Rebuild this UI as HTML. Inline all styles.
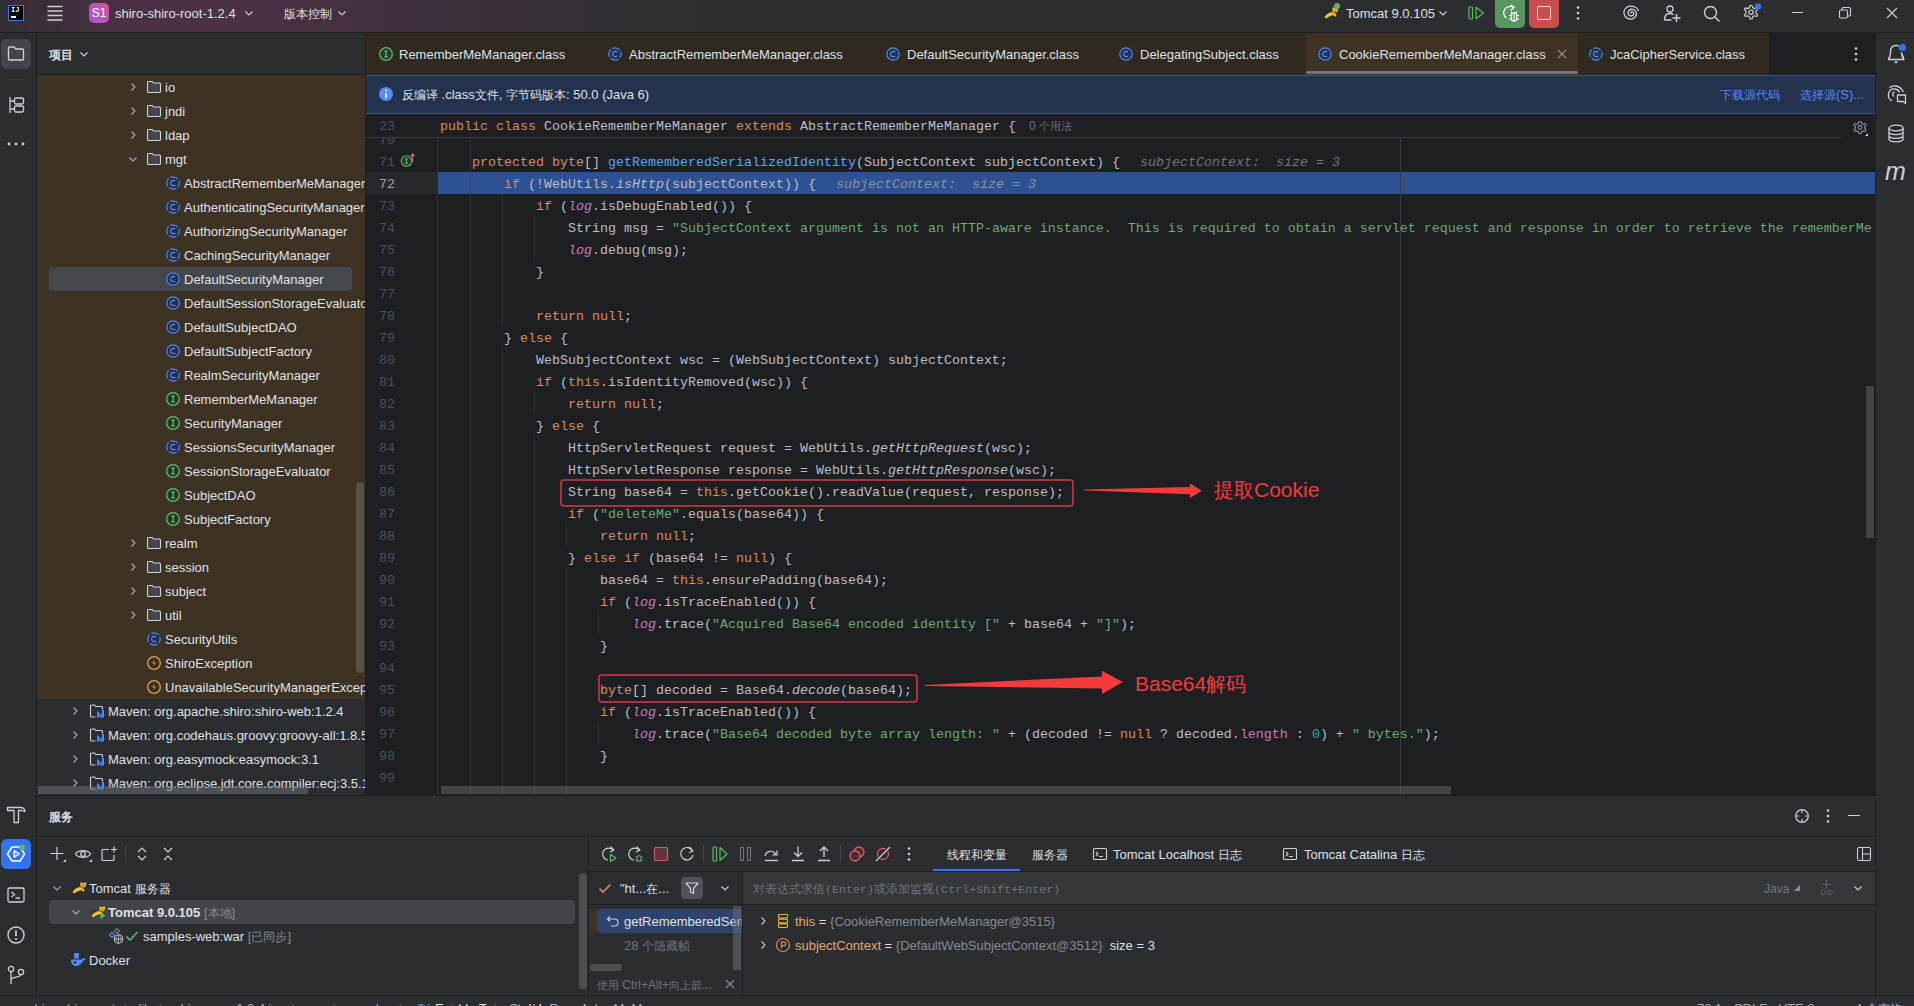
<!DOCTYPE html><html><head><meta charset="utf-8"><style>
*{margin:0;padding:0;box-sizing:border-box}
html,body{width:1914px;height:1006px;overflow:hidden;background:#2B2D30}
body{position:relative;font-family:"Liberation Sans",sans-serif;font-size:13px;color:#DFE1E5}
.a{position:absolute}
.mono{font-family:"Liberation Mono",monospace}
.ln{position:absolute;left:365px;width:30px;height:22px;line-height:22px;padding-top:2px;text-align:right;font-family:"Liberation Mono",monospace;font-size:13.333px;color:#4B5059}
.ln.cur{color:#A1A3AB}
.cl{position:absolute;left:440px;height:24px;line-height:22px;padding-top:2px;white-space:pre;font-family:"Liberation Mono",monospace;font-size:13.333px;color:#BCBEC4}
.k{color:#CF8E6D}.s{color:#6AAB73}.f{color:#56A8F5}.sf{color:#C77DBB;font-style:italic}.n{color:#2AACB8}.fld{color:#C77DBB}
.cl i{font-style:italic}
.hint{color:#6F737A;font-style:italic}
.ig{position:absolute;width:1px;background:#313338}
.t{position:absolute;white-space:pre;line-height:16px}
</style></head><body>
<div class="a" style="left:0;top:0;width:1914px;height:33px;background:#2B2D30"></div>
<div class="a" style="left:0;top:0;width:900px;height:33px;background:linear-gradient(90deg, rgba(120,55,95,0.08) 0, rgba(120,55,95,0.42) 130px, rgba(120,55,95,0.42) 230px, rgba(120,55,95,0.25) 420px, rgba(120,55,95,0.08) 620px, rgba(120,55,95,0) 800px)"></div>
<div class="a" style="left:365px;top:33px;width:1510px;height:763px;background:#1E1F22;overflow:hidden">
</div>
<div class="a" style="left:0;top:0;width:1875px;height:796px;overflow:hidden;clip-path:inset(137px 0 0 365px)">
<div class="ig" style="left:437px;top:128px;height:682px"></div><div class="ig" style="left:470px;top:128px;height:682px"></div><div class="ig" style="left:502px;top:194px;height:132px"></div><div class="ig" style="left:502px;top:348px;height:462px"></div><div class="ig" style="left:534px;top:216px;height:44px"></div><div class="ig" style="left:534px;top:392px;height:22px"></div><div class="ig" style="left:534px;top:436px;height:374px"></div><div class="ig" style="left:566px;top:524px;height:22px"></div><div class="ig" style="left:566px;top:568px;height:242px"></div><div class="ig" style="left:598px;top:612px;height:22px"></div><div class="ig" style="left:598px;top:722px;height:22px"></div>
<div class="a" style="left:438px;top:172px;width:1437px;height:22px;background:#2D5193"></div>
<div class="a" style="left:366px;top:172px;width:72px;height:22px;background:#26282C"></div>
<div class="a" style="left:470px;top:172px;width:1px;height:22px;background:#28467C"></div>
<div class="a" style="left:1400px;top:114px;width:1px;height:682px;background:#393B40"></div>
<div class="ln" style="top:128px">70</div><div class="ln" style="top:150px">71</div><div class="cl" style="top:150px">    <span class="k">protected</span> <span class="k">byte</span>[] <span class="f">getRememberedSerializedIdentity</span>(SubjectContext subjectContext) {</div><div class="ln cur" style="top:172px">72</div><div class="cl" style="top:172px">        <span class="k">if</span> (!WebUtils.<i>isHttp</i>(subjectContext)) {</div><div class="ln" style="top:194px">73</div><div class="cl" style="top:194px">            <span class="k">if</span> (<span class="sf">log</span>.isDebugEnabled()) {</div><div class="ln" style="top:216px">74</div><div class="cl" style="top:216px">                String msg = <span class="s">&quot;SubjectContext argument is not an HTTP-aware instance.  This is required to obtain a servlet request and response in order to retrieve the rememberMe cookie. Returning immediately and ignoring rememberMe operation.&quot;</span>;</div><div class="ln" style="top:238px">75</div><div class="cl" style="top:238px">                <span class="sf">log</span>.debug(msg);</div><div class="ln" style="top:260px">76</div><div class="cl" style="top:260px">            }</div><div class="ln" style="top:282px">77</div><div class="ln" style="top:304px">78</div><div class="cl" style="top:304px">            <span class="k">return</span> <span class="k">null</span>;</div><div class="ln" style="top:326px">79</div><div class="cl" style="top:326px">        } <span class="k">else</span> {</div><div class="ln" style="top:348px">80</div><div class="cl" style="top:348px">            WebSubjectContext wsc = (WebSubjectContext) subjectContext;</div><div class="ln" style="top:370px">81</div><div class="cl" style="top:370px">            <span class="k">if</span> (<span class="k">this</span>.isIdentityRemoved(wsc)) {</div><div class="ln" style="top:392px">82</div><div class="cl" style="top:392px">                <span class="k">return</span> <span class="k">null</span>;</div><div class="ln" style="top:414px">83</div><div class="cl" style="top:414px">            } <span class="k">else</span> {</div><div class="ln" style="top:436px">84</div><div class="cl" style="top:436px">                HttpServletRequest request = WebUtils.<i>getHttpRequest</i>(wsc);</div><div class="ln" style="top:458px">85</div><div class="cl" style="top:458px">                HttpServletResponse response = WebUtils.<i>getHttpResponse</i>(wsc);</div><div class="ln" style="top:480px">86</div><div class="cl" style="top:480px">                String base64 = <span class="k">this</span>.getCookie().readValue(request, response);</div><div class="ln" style="top:502px">87</div><div class="cl" style="top:502px">                <span class="k">if</span> (<span class="s">&quot;deleteMe&quot;</span>.equals(base64)) {</div><div class="ln" style="top:524px">88</div><div class="cl" style="top:524px">                    <span class="k">return</span> <span class="k">null</span>;</div><div class="ln" style="top:546px">89</div><div class="cl" style="top:546px">                } <span class="k">else if</span> (base64 != <span class="k">null</span>) {</div><div class="ln" style="top:568px">90</div><div class="cl" style="top:568px">                    base64 = <span class="k">this</span>.ensurePadding(base64);</div><div class="ln" style="top:590px">91</div><div class="cl" style="top:590px">                    <span class="k">if</span> (<span class="sf">log</span>.isTraceEnabled()) {</div><div class="ln" style="top:612px">92</div><div class="cl" style="top:612px">                        <span class="sf">log</span>.trace(<span class="s">&quot;Acquired Base64 encoded identity [&quot;</span> + base64 + <span class="s">&quot;]&quot;</span>);</div><div class="ln" style="top:634px">93</div><div class="cl" style="top:634px">                    }</div><div class="ln" style="top:656px">94</div><div class="ln" style="top:678px">95</div><div class="cl" style="top:678px">                    <span class="k">byte</span>[] decoded = Base64.<i>decode</i>(base64);</div><div class="ln" style="top:700px">96</div><div class="cl" style="top:700px">                    <span class="k">if</span> (<span class="sf">log</span>.isTraceEnabled()) {</div><div class="ln" style="top:722px">97</div><div class="cl" style="top:722px">                        <span class="sf">log</span>.trace(<span class="s">&quot;Base64 decoded byte array length: &quot;</span> + (decoded != <span class="k">null</span> ? decoded.<span class="fld">length</span> : <span class="n">0</span>) + <span class="s">&quot; bytes.&quot;</span>);</div><div class="ln" style="top:744px">98</div><div class="cl" style="top:744px">                    }</div><div class="ln" style="top:766px">99</div><div class="ln" style="top:788px">100</div><div class="cl" style="top:788px">                    <span class="k">return</span> decoded;</div>
<div class="cl hint" style="top:150px;left:1140px">subjectContext:  size = 3</div>
<div class="cl hint" style="top:172px;left:836px;color:#8C93A3">subjectContext:  size = 3</div>
</div>
<div class="a" style="left:36px;top:33px;width:1px;height:963px;background:#1E1F22"></div>
<div class="a" style="left:0;top:32px;width:1914px;height:1px;background:#1E1F22"></div>
<div class="a" style="left:1px;top:39px;width:30px;height:30px;border-radius:6px;background:#43454A"></div>
<svg class="a" style="left:6px;top:45px;" width="20" height="18" viewBox="0 0 20 18" fill="none"><path d="M2.5 3 a1 1 0 0 1 1-1 H8 L10 4 H16.5 a1 1 0 0 1 1 1 V14 a1 1 0 0 1 -1 1 H3.5 a1 1 0 0 1 -1-1 Z" stroke="#CED0D6" stroke-width="1.3"/></svg>
<div class="a" style="left:4px;top:79px;width:24px;height:1px;background:#393B40"></div>
<svg class="a" style="left:6px;top:95px;" width="20" height="20" viewBox="0 0 20 20" fill="none"><path d="M4 2 V18 M4 6 H8 M4 14 H8" stroke="#CED0D6" stroke-width="1.3"/><rect x="8.5" y="3" width="9" height="6" rx="1.5" stroke="#CED0D6" stroke-width="1.3"/><rect x="8.5" y="11" width="9" height="6" rx="1.5" stroke="#CED0D6" stroke-width="1.3"/></svg>
<svg class="a" style="left:6px;top:139px;" width="20" height="10" viewBox="0 0 20 10" fill="none"><circle cx="3" cy="5" r="1.4" fill="#CED0D6"/><circle cx="10" cy="5" r="1.4" fill="#CED0D6"/><circle cx="17" cy="5" r="1.4" fill="#CED0D6"/></svg>
<svg class="a" style="left:5px;top:805px;" width="22" height="20" viewBox="0 0 22 20" fill="none"><path d="M2.5 2.5 H16 C18 2.5 19.5 4 20 6.5 L16.5 5.5 H13.5 V17.5 H9 V5.5 H2.5 Z" stroke="#CED0D6" stroke-width="1.3" stroke-linejoin="round"/></svg>
<div class="a" style="left:1px;top:839px;width:30px;height:30px;border-radius:6px;background:#3574F0"></div>
<svg class="a" style="left:6px;top:844px;" width="20" height="20" viewBox="0 0 20 20" fill="none"><path d="M6 3 H14 L18.5 10 L14 17 H6 L1.5 10 Z" stroke="#FFFFFF" stroke-width="1.5" stroke-linejoin="round"/><path d="M8.2 6.8 V13.2 L13.2 10 Z" stroke="#FFFFFF" stroke-width="1.4" stroke-linejoin="round"/><circle cx="16" cy="3.5" r="3" fill="#5FB865"/></svg>
<svg class="a" style="left:6px;top:885px;" width="20" height="20" viewBox="0 0 20 20" fill="none"><rect x="2" y="3" width="16" height="14" rx="1.5" stroke="#CED0D6" stroke-width="1.3"/><path d="M5.5 7 L8.5 9.5 L5.5 12 M9.5 13 H14" stroke="#CED0D6" stroke-width="1.3"/></svg>
<svg class="a" style="left:6px;top:925px;" width="20" height="20" viewBox="0 0 20 20" fill="none"><circle cx="10" cy="10" r="8" stroke="#CED0D6" stroke-width="1.4"/><path d="M10 5.5 V11" stroke="#CED0D6" stroke-width="1.8"/><circle cx="10" cy="14" r="1.1" fill="#CED0D6"/></svg>
<svg class="a" style="left:6px;top:964px;" width="20" height="22" viewBox="0 0 20 22" fill="none"><circle cx="5" cy="5" r="2.6" stroke="#CED0D6" stroke-width="1.3"/><circle cx="15" cy="8" r="2.6" stroke="#CED0D6" stroke-width="1.3"/><path d="M5 7.6 V20 M5 16 C5 12 15 14 15 10.6" stroke="#CED0D6" stroke-width="1.3"/></svg>
<div class="a" style="left:1875px;top:33px;width:1px;height:963px;background:#1E1F22"></div>
<svg class="a" style="left:1880px;top:40px;" width="32" height="70" viewBox="0 0 32 70" fill="none"><g transform="translate(0,-40)"><path d="M8 59.5 C9.5 58 10.5 56 10.5 52 C10.5 47.5 12.5 45.5 16 45.5 C17 45.5 18 45.7 18.8 46.2 M21.5 52.5 C21.5 56 22.5 58 24 59.5 Z M8 59.5 H24" stroke="#CED0D6" stroke-width="1.3" stroke-linejoin="round"/><path d="M14.5 61.8 H17.5 L16 63.3 Z" fill="#CED0D6" stroke="#CED0D6" stroke-width="0.8"/><circle cx="22.4" cy="47.5" r="3.6" fill="#3574F0"/><path d="M9.5 87.5 C13 85 19.5 84.5 23.5 92 M12 101 C6 98 8 88 15 89 C17.5 89.3 19 91 19.6 92.5 M14 96.5 C12 95 12.5 92 14.8 92.2" stroke="#CED0D6" stroke-width="1.3"/><path d="M17.5 95 H25.5 V103.5 L23 101.5 H17.5 Z" stroke="#CED0D6" stroke-width="1.3" stroke-linejoin="round"/></g></svg>
<svg class="a" style="left:1886px;top:123px;" width="20" height="22" viewBox="0 0 20 22" fill="none"><ellipse cx="10" cy="5" rx="7" ry="2.8" stroke="#CED0D6" stroke-width="1.3"/><path d="M3 5 V16 A7 2.8 0 0 0 17 16 V5 M3 8.8 A7 2.8 0 0 0 17 8.8 M3 12.5 A7 2.8 0 0 0 17 12.5" stroke="#CED0D6" stroke-width="1.3"/></svg>
<div class="a" style="left:1885px;top:156px;width:24px;height:30px;font-family:'Liberation Sans',sans-serif;font-style:italic;font-size:25px;line-height:30px;color:#CED0D6">m</div>
<div class="a" style="left:8px;top:5px;width:16px;height:16px;background:#000;border:1.5px solid #2F7CF6"></div>
<div class="a mono" style="left:11px;top:6px;font-size:7px;line-height:8px;font-weight:bold;color:#fff">IJ</div>
<div class="a" style="left:11px;top:16px;width:5px;height:1.5px;background:#fff"></div>
<svg class="a" style="left:46px;top:4px;" width="18" height="18" viewBox="0 0 18 18" fill="none"><path d="M1.5 2.5 H16.5 M1.5 7 H16.5 M1.5 11.5 H16.5 M1.5 16 H16.5" stroke="#CED0D6" stroke-width="1.3"/></svg>
<div class="a" style="left:89px;top:3px;width:20px;height:20px;border-radius:5px;background:linear-gradient(45deg,#A457D6,#D4519A)"></div>
<div class="a" style="left:89px;top:3px;width:20px;height:20px;text-align:center;font-size:12px;line-height:20px;color:#fff">S1</div>
<div class="t" style="left:115px;top:6.0px;color:#DFE1E5;font-size:13px;line-height:16px;">shiro-shiro-root-1.2.4</div>
<svg class="a" style="left:244px;top:8px;" width="10" height="10" viewBox="0 0 10 10" fill="none"><path d="M1.5 3.5 L5 7 L8.5 3.5" stroke="#CED0D6" stroke-width="1.1"/></svg>
<div class="t" style="left:284px;top:6.0px;color:#DFE1E5;font-size:13px;line-height:16px;"><span style="font-size:12.0px">版本控制</span></div>
<svg class="a" style="left:337px;top:8px;" width="10" height="10" viewBox="0 0 10 10" fill="none"><path d="M1.5 3.5 L5 7 L8.5 3.5" stroke="#CED0D6" stroke-width="1.1"/></svg>
<svg class="a" style="left:1323px;top:4px;" width="17" height="17" viewBox="0 0 17 17" fill="none"><path d="M1 13.5 C2.5 10.5 5.5 8 9.5 7.5 L12.5 8.5 L14 12.5 L12 13 L10.5 11.5 C8 12 5.5 13 3.5 14.8 Z" fill="#F0C23B" stroke="#2A2410" stroke-width="0.7"/><path d="M9 5.5 L9.3 2 L11 3.6 H13.4 L15.2 2 L15.4 5.5 C15.4 7.8 14 9 12.2 9 C10.4 9 9 7.8 9 5.5 Z" fill="#F0C23B" stroke="#2A2410" stroke-width="0.7"/><path d="M11 5.8 H11.6 M12.9 5.8 H13.5 M11.6 7.3 H12.9" stroke="#2A2410" stroke-width="0.8"/><path d="M1 9.5 C2.5 8 4.5 7.6 6 8" stroke="#2A2410" stroke-width="0.9"/></svg>
<div class="a" style="left:1334px;top:3px;width:6px;height:6px;border-radius:3px;background:#5FB865"></div>
<div class="t" style="left:1346px;top:6.0px;color:#DFE1E5;font-size:13px;line-height:16px;">Tomcat 9.0.105</div>
<svg class="a" style="left:1438px;top:8px;" width="10" height="10" viewBox="0 0 10 10" fill="none"><path d="M1.5 3.5 L5 7 L8.5 3.5" stroke="#CED0D6" stroke-width="1.1"/></svg>
<svg class="a" style="left:1467px;top:5px;" width="18" height="16" viewBox="0 0 18 16" fill="none"><rect x="2" y="2" width="3.5" height="12" rx="0.8" stroke="#5FB865" stroke-width="1.2"/><path d="M9 2.2 L16.5 8 L9 13.8 Z" stroke="#5FB865" stroke-width="1.2" stroke-linejoin="round"/></svg>
<div class="a" style="left:1495px;top:-5px;width:30px;height:33px;border-radius:5px;background:#57965C"></div>
<svg class="a" style="left:1500px;top:3px;" width="22" height="22" viewBox="0 0 22 22" fill="none"><path d="M13.5 4.5 A6.3 6.3 0 1 0 6.5 15" stroke="#fff" stroke-width="1.3"/><path d="M10.8 1.8 L14 4.6 L10.8 7.2" stroke="#fff" stroke-width="1.3"/><path d="M11.3 12.5 a2.7 2.7 0 0 1 5.4 0 V15.5 a2.7 2.7 0 0 1 -5.4 0 Z" stroke="#fff" stroke-width="1.2"/><path d="M9 12.5 H11.3 M16.7 12.5 H19 M9 16 H11.3 M16.7 16 H19 M12 10 L11 8.5 M16 10 L17 8.5 M14 11 V18" stroke="#fff" stroke-width="1.1"/></svg>
<div class="a" style="left:1529px;top:-5px;width:30px;height:33px;border-radius:5px;background:#C94F4F"></div>
<div class="a" style="left:1537px;top:6px;width:14px;height:14px;border-radius:2px;border:1.6px solid #F5D9D9"></div>
<svg class="a" style="left:1575px;top:5px;" width="6" height="16" viewBox="0 0 6 16" fill="none"><circle cx="3" cy="2.5" r="1.3" fill="#CED0D6"/><circle cx="3" cy="8" r="1.3" fill="#CED0D6"/><circle cx="3" cy="13.5" r="1.3" fill="#CED0D6"/></svg>
<svg class="a" style="left:1621px;top:3px;" width="20" height="20" viewBox="0 0 20 20" fill="none"><path d="M10 10.5 C9 9.5 10.5 8 12 8.8 C14 10 12.5 13 10 13 C7 13 6 9.5 8 7.5 C10.5 5 15 6.5 15.5 10 C16 14 12 16.5 8.5 16 C4.5 15.5 2.5 12 3 8.5 C3.5 5 7 3 10.5 3.2 C14 3.4 17 5.5 17.5 8" stroke="#CED0D6" stroke-width="1.3"/></svg>
<svg class="a" style="left:1662px;top:3px;" width="20" height="20" viewBox="0 0 20 20" fill="none"><circle cx="8" cy="6" r="3" stroke="#CED0D6" stroke-width="1.3"/><path d="M2.5 17 C2.5 12.5 5 10.5 8 10.5 C9.5 10.5 10.5 11 11.5 11.8 M2.5 17 H9.5" stroke="#CED0D6" stroke-width="1.3"/><path d="M14.5 11 V19 M10.5 15 H18.5" stroke="#CED0D6" stroke-width="1.4"/></svg>
<svg class="a" style="left:1702px;top:4px;" width="20" height="20" viewBox="0 0 20 20" fill="none"><circle cx="8.5" cy="8.5" r="6" stroke="#CED0D6" stroke-width="1.4"/><path d="M13 13 L17.5 17.5" stroke="#CED0D6" stroke-width="1.5"/></svg>
<svg class="a" style="left:1741px;top:3px;" width="22" height="20" viewBox="0 0 22 20" fill="none"><path d="M9 2.5 H11 L11.6 4.6 L13.5 5.6 L15.6 4.9 L16.6 6.6 L15 8.2 V10.2 L16.6 11.8 L15.6 13.5 L13.5 12.8 L11.6 13.8 L11 16 H9 L8.4 13.8 L6.5 12.8 L4.4 13.5 L3.4 11.8 L5 10.2 V8.2 L3.4 6.6 L4.4 4.9 L6.5 5.6 L8.4 4.6 Z" stroke="#CED0D6" stroke-width="1.2" stroke-linejoin="round"/><circle cx="10" cy="9.2" r="2.2" stroke="#CED0D6" stroke-width="1.2"/><circle cx="17" cy="3.5" r="3.2" fill="#3574F0"/></svg>
<div class="a" style="left:1792px;top:12px;width:11px;height:1px;background:#CED0D6"></div>
<svg class="a" style="left:1838px;top:6px;" width="14" height="14" viewBox="0 0 14 14" fill="none"><rect x="1.5" y="4" width="8" height="8" rx="1.5" stroke="#CED0D6" stroke-width="1.1"/><path d="M4 4 V3 a1.5 1.5 0 0 1 1.5-1.5 H11 a1.5 1.5 0 0 1 1.5 1.5 V8.5 a1.5 1.5 0 0 1 -1.5 1.5 H9.5" stroke="#CED0D6" stroke-width="1.1"/></svg>
<svg class="a" style="left:1886px;top:7px;" width="12" height="12" viewBox="0 0 12 12" fill="none"><path d="M1 1 L11 11 M11 1 L1 11" stroke="#CED0D6" stroke-width="1.1"/></svg>
<div class="t" style="left:49px;top:47.0px;color:#DFE1E5;font-size:13px;line-height:16px;font-weight:bold"><span style="font-size:12.0px">项目</span></div>
<svg class="a" style="left:79px;top:49px;" width="10" height="10" viewBox="0 0 10 10" fill="none"><path d="M1.5 3.5 L5 7 L8.5 3.5" stroke="#CED0D6" stroke-width="1.1"/></svg>
<div class="a" style="left:37px;top:74px;width:328px;height:1px;background:#1E1F22"></div>
<div class="a" style="left:37px;top:75px;width:328px;height:624px;background:#3D3223"></div>
<div class="a" style="left:0;top:0;width:365px;height:795px;overflow:hidden">
<div class="a" style="left:49px;top:267px;width:303px;height:24px;border-radius:4px;background:#45474D"></div>
<svg class="a" style="left:128px;top:82px;" width="10" height="10" viewBox="0 0 10 10" fill="none"><path d="M3.5 1.5 L7 5 L3.5 8.5" stroke="#A8ADBD" stroke-width="1.1"/></svg>
<svg class="a" style="left:146px;top:80px;" width="16" height="14" viewBox="0 0 16 14" fill="none"><path d="M1.5 2.5 a1 1 0 0 1 1-1 H6 L7.6 3 H13.5 a1 1 0 0 1 1 1 V11.5 a1 1 0 0 1 -1 1 H2.5 a1 1 0 0 1 -1-1 Z" fill="#43454A" stroke="#CED0D6" stroke-width="1.1"/></svg>
<div class="t" style="left:165px;top:80.0px;color:#DFE1E5;font-size:13px;line-height:16px;">io</div>
<svg class="a" style="left:128px;top:106px;" width="10" height="10" viewBox="0 0 10 10" fill="none"><path d="M3.5 1.5 L7 5 L3.5 8.5" stroke="#A8ADBD" stroke-width="1.1"/></svg>
<svg class="a" style="left:146px;top:104px;" width="16" height="14" viewBox="0 0 16 14" fill="none"><path d="M1.5 2.5 a1 1 0 0 1 1-1 H6 L7.6 3 H13.5 a1 1 0 0 1 1 1 V11.5 a1 1 0 0 1 -1 1 H2.5 a1 1 0 0 1 -1-1 Z" fill="#43454A" stroke="#CED0D6" stroke-width="1.1"/></svg>
<div class="t" style="left:165px;top:104.0px;color:#DFE1E5;font-size:13px;line-height:16px;">jndi</div>
<svg class="a" style="left:128px;top:130px;" width="10" height="10" viewBox="0 0 10 10" fill="none"><path d="M3.5 1.5 L7 5 L3.5 8.5" stroke="#A8ADBD" stroke-width="1.1"/></svg>
<svg class="a" style="left:146px;top:128px;" width="16" height="14" viewBox="0 0 16 14" fill="none"><path d="M1.5 2.5 a1 1 0 0 1 1-1 H6 L7.6 3 H13.5 a1 1 0 0 1 1 1 V11.5 a1 1 0 0 1 -1 1 H2.5 a1 1 0 0 1 -1-1 Z" fill="#43454A" stroke="#CED0D6" stroke-width="1.1"/></svg>
<div class="t" style="left:165px;top:128.0px;color:#DFE1E5;font-size:13px;line-height:16px;">ldap</div>
<svg class="a" style="left:128px;top:154px;" width="10" height="10" viewBox="0 0 10 10" fill="none"><path d="M1.5 3.5 L5 7 L8.5 3.5" stroke="#A8ADBD" stroke-width="1.1"/></svg>
<svg class="a" style="left:146px;top:152px;" width="16" height="14" viewBox="0 0 16 14" fill="none"><path d="M1.5 2.5 a1 1 0 0 1 1-1 H6 L7.6 3 H13.5 a1 1 0 0 1 1 1 V11.5 a1 1 0 0 1 -1 1 H2.5 a1 1 0 0 1 -1-1 Z" fill="#43454A" stroke="#CED0D6" stroke-width="1.1"/></svg>
<div class="t" style="left:165px;top:152.0px;color:#DFE1E5;font-size:13px;line-height:16px;">mgt</div>
<svg class="a" style="left:165px;top:175px;" width="16" height="16" viewBox="0 0 16 16" fill="none"><circle cx="8" cy="8" r="6.2" fill="#25324F" stroke="#5086EE" stroke-width="1.2" stroke-dasharray="8.2 1.7" stroke-dashoffset="4.1"/><path d="M10.1 6.2 A2.6 2.6 0 1 0 10.1 9.8" stroke="#5C8FF0" stroke-width="1.1"/></svg>
<div class="t" style="left:184px;top:176.0px;color:#DFE1E5;font-size:13px;line-height:16px;">AbstractRememberMeManager</div>
<svg class="a" style="left:165px;top:199px;" width="16" height="16" viewBox="0 0 16 16" fill="none"><circle cx="8" cy="8" r="6.2" fill="#25324F" stroke="#5086EE" stroke-width="1.2" stroke-dasharray="8.2 1.7" stroke-dashoffset="4.1"/><path d="M10.1 6.2 A2.6 2.6 0 1 0 10.1 9.8" stroke="#5C8FF0" stroke-width="1.1"/></svg>
<div class="t" style="left:184px;top:200.0px;color:#DFE1E5;font-size:13px;line-height:16px;">AuthenticatingSecurityManager</div>
<svg class="a" style="left:165px;top:223px;" width="16" height="16" viewBox="0 0 16 16" fill="none"><circle cx="8" cy="8" r="6.2" fill="#25324F" stroke="#5086EE" stroke-width="1.2" stroke-dasharray="8.2 1.7" stroke-dashoffset="4.1"/><path d="M10.1 6.2 A2.6 2.6 0 1 0 10.1 9.8" stroke="#5C8FF0" stroke-width="1.1"/></svg>
<div class="t" style="left:184px;top:224.0px;color:#DFE1E5;font-size:13px;line-height:16px;">AuthorizingSecurityManager</div>
<svg class="a" style="left:165px;top:247px;" width="16" height="16" viewBox="0 0 16 16" fill="none"><circle cx="8" cy="8" r="6.2" fill="#25324F" stroke="#5086EE" stroke-width="1.2" stroke-dasharray="8.2 1.7" stroke-dashoffset="4.1"/><path d="M10.1 6.2 A2.6 2.6 0 1 0 10.1 9.8" stroke="#5C8FF0" stroke-width="1.1"/></svg>
<div class="t" style="left:184px;top:248.0px;color:#DFE1E5;font-size:13px;line-height:16px;">CachingSecurityManager</div>
<svg class="a" style="left:165px;top:271px;" width="16" height="16" viewBox="0 0 16 16" fill="none"><circle cx="8" cy="8" r="6.2" fill="#25324F" stroke="#5086EE" stroke-width="1.2"/><path d="M10.1 6.2 A2.6 2.6 0 1 0 10.1 9.8" stroke="#5C8FF0" stroke-width="1.1"/></svg>
<div class="t" style="left:184px;top:272.0px;color:#DFE1E5;font-size:13px;line-height:16px;">DefaultSecurityManager</div>
<svg class="a" style="left:165px;top:295px;" width="16" height="16" viewBox="0 0 16 16" fill="none"><circle cx="8" cy="8" r="6.2" fill="#25324F" stroke="#5086EE" stroke-width="1.2"/><path d="M10.1 6.2 A2.6 2.6 0 1 0 10.1 9.8" stroke="#5C8FF0" stroke-width="1.1"/></svg>
<div class="t" style="left:184px;top:296.0px;color:#DFE1E5;font-size:13px;line-height:16px;">DefaultSessionStorageEvaluator</div>
<svg class="a" style="left:165px;top:319px;" width="16" height="16" viewBox="0 0 16 16" fill="none"><circle cx="8" cy="8" r="6.2" fill="#25324F" stroke="#5086EE" stroke-width="1.2"/><path d="M10.1 6.2 A2.6 2.6 0 1 0 10.1 9.8" stroke="#5C8FF0" stroke-width="1.1"/></svg>
<div class="t" style="left:184px;top:320.0px;color:#DFE1E5;font-size:13px;line-height:16px;">DefaultSubjectDAO</div>
<svg class="a" style="left:165px;top:343px;" width="16" height="16" viewBox="0 0 16 16" fill="none"><circle cx="8" cy="8" r="6.2" fill="#25324F" stroke="#5086EE" stroke-width="1.2"/><path d="M10.1 6.2 A2.6 2.6 0 1 0 10.1 9.8" stroke="#5C8FF0" stroke-width="1.1"/></svg>
<div class="t" style="left:184px;top:344.0px;color:#DFE1E5;font-size:13px;line-height:16px;">DefaultSubjectFactory</div>
<svg class="a" style="left:165px;top:367px;" width="16" height="16" viewBox="0 0 16 16" fill="none"><circle cx="8" cy="8" r="6.2" fill="#25324F" stroke="#5086EE" stroke-width="1.2" stroke-dasharray="8.2 1.7" stroke-dashoffset="4.1"/><path d="M10.1 6.2 A2.6 2.6 0 1 0 10.1 9.8" stroke="#5C8FF0" stroke-width="1.1"/></svg>
<div class="t" style="left:184px;top:368.0px;color:#DFE1E5;font-size:13px;line-height:16px;">RealmSecurityManager</div>
<svg class="a" style="left:165px;top:391px;" width="16" height="16" viewBox="0 0 16 16" fill="none"><circle cx="8" cy="8" r="6.3" fill="#253A2A" stroke="#5FB865" stroke-width="1.3"/><path d="M6.2 5.2 H9.8 M6.2 10.8 H9.8 M8 5.2 V10.8" stroke="#5FB865" stroke-width="1.3"/></svg>
<div class="t" style="left:184px;top:392.0px;color:#DFE1E5;font-size:13px;line-height:16px;">RememberMeManager</div>
<svg class="a" style="left:165px;top:415px;" width="16" height="16" viewBox="0 0 16 16" fill="none"><circle cx="8" cy="8" r="6.3" fill="#253A2A" stroke="#5FB865" stroke-width="1.3"/><path d="M6.2 5.2 H9.8 M6.2 10.8 H9.8 M8 5.2 V10.8" stroke="#5FB865" stroke-width="1.3"/></svg>
<div class="t" style="left:184px;top:416.0px;color:#DFE1E5;font-size:13px;line-height:16px;">SecurityManager</div>
<svg class="a" style="left:165px;top:439px;" width="16" height="16" viewBox="0 0 16 16" fill="none"><circle cx="8" cy="8" r="6.2" fill="#25324F" stroke="#5086EE" stroke-width="1.2" stroke-dasharray="8.2 1.7" stroke-dashoffset="4.1"/><path d="M10.1 6.2 A2.6 2.6 0 1 0 10.1 9.8" stroke="#5C8FF0" stroke-width="1.1"/></svg>
<div class="t" style="left:184px;top:440.0px;color:#DFE1E5;font-size:13px;line-height:16px;">SessionsSecurityManager</div>
<svg class="a" style="left:165px;top:463px;" width="16" height="16" viewBox="0 0 16 16" fill="none"><circle cx="8" cy="8" r="6.3" fill="#253A2A" stroke="#5FB865" stroke-width="1.3"/><path d="M6.2 5.2 H9.8 M6.2 10.8 H9.8 M8 5.2 V10.8" stroke="#5FB865" stroke-width="1.3"/></svg>
<div class="t" style="left:184px;top:464.0px;color:#DFE1E5;font-size:13px;line-height:16px;">SessionStorageEvaluator</div>
<svg class="a" style="left:165px;top:487px;" width="16" height="16" viewBox="0 0 16 16" fill="none"><circle cx="8" cy="8" r="6.3" fill="#253A2A" stroke="#5FB865" stroke-width="1.3"/><path d="M6.2 5.2 H9.8 M6.2 10.8 H9.8 M8 5.2 V10.8" stroke="#5FB865" stroke-width="1.3"/></svg>
<div class="t" style="left:184px;top:488.0px;color:#DFE1E5;font-size:13px;line-height:16px;">SubjectDAO</div>
<svg class="a" style="left:165px;top:511px;" width="16" height="16" viewBox="0 0 16 16" fill="none"><circle cx="8" cy="8" r="6.3" fill="#253A2A" stroke="#5FB865" stroke-width="1.3"/><path d="M6.2 5.2 H9.8 M6.2 10.8 H9.8 M8 5.2 V10.8" stroke="#5FB865" stroke-width="1.3"/></svg>
<div class="t" style="left:184px;top:512.0px;color:#DFE1E5;font-size:13px;line-height:16px;">SubjectFactory</div>
<svg class="a" style="left:128px;top:538px;" width="10" height="10" viewBox="0 0 10 10" fill="none"><path d="M3.5 1.5 L7 5 L3.5 8.5" stroke="#A8ADBD" stroke-width="1.1"/></svg>
<svg class="a" style="left:146px;top:536px;" width="16" height="14" viewBox="0 0 16 14" fill="none"><path d="M1.5 2.5 a1 1 0 0 1 1-1 H6 L7.6 3 H13.5 a1 1 0 0 1 1 1 V11.5 a1 1 0 0 1 -1 1 H2.5 a1 1 0 0 1 -1-1 Z" fill="#43454A" stroke="#CED0D6" stroke-width="1.1"/></svg>
<div class="t" style="left:165px;top:536.0px;color:#DFE1E5;font-size:13px;line-height:16px;">realm</div>
<svg class="a" style="left:128px;top:562px;" width="10" height="10" viewBox="0 0 10 10" fill="none"><path d="M3.5 1.5 L7 5 L3.5 8.5" stroke="#A8ADBD" stroke-width="1.1"/></svg>
<svg class="a" style="left:146px;top:560px;" width="16" height="14" viewBox="0 0 16 14" fill="none"><path d="M1.5 2.5 a1 1 0 0 1 1-1 H6 L7.6 3 H13.5 a1 1 0 0 1 1 1 V11.5 a1 1 0 0 1 -1 1 H2.5 a1 1 0 0 1 -1-1 Z" fill="#43454A" stroke="#CED0D6" stroke-width="1.1"/></svg>
<div class="t" style="left:165px;top:560.0px;color:#DFE1E5;font-size:13px;line-height:16px;">session</div>
<svg class="a" style="left:128px;top:586px;" width="10" height="10" viewBox="0 0 10 10" fill="none"><path d="M3.5 1.5 L7 5 L3.5 8.5" stroke="#A8ADBD" stroke-width="1.1"/></svg>
<svg class="a" style="left:146px;top:584px;" width="16" height="14" viewBox="0 0 16 14" fill="none"><path d="M1.5 2.5 a1 1 0 0 1 1-1 H6 L7.6 3 H13.5 a1 1 0 0 1 1 1 V11.5 a1 1 0 0 1 -1 1 H2.5 a1 1 0 0 1 -1-1 Z" fill="#43454A" stroke="#CED0D6" stroke-width="1.1"/></svg>
<div class="t" style="left:165px;top:584.0px;color:#DFE1E5;font-size:13px;line-height:16px;">subject</div>
<svg class="a" style="left:128px;top:610px;" width="10" height="10" viewBox="0 0 10 10" fill="none"><path d="M3.5 1.5 L7 5 L3.5 8.5" stroke="#A8ADBD" stroke-width="1.1"/></svg>
<svg class="a" style="left:146px;top:608px;" width="16" height="14" viewBox="0 0 16 14" fill="none"><path d="M1.5 2.5 a1 1 0 0 1 1-1 H6 L7.6 3 H13.5 a1 1 0 0 1 1 1 V11.5 a1 1 0 0 1 -1 1 H2.5 a1 1 0 0 1 -1-1 Z" fill="#43454A" stroke="#CED0D6" stroke-width="1.1"/></svg>
<div class="t" style="left:165px;top:608.0px;color:#DFE1E5;font-size:13px;line-height:16px;">util</div>
<svg class="a" style="left:146px;top:631px;" width="16" height="16" viewBox="0 0 16 16" fill="none"><circle cx="8" cy="8" r="6.2" fill="#25324F" stroke="#5086EE" stroke-width="1.2" stroke-dasharray="8.2 1.7" stroke-dashoffset="4.1"/><path d="M10.1 6.2 A2.6 2.6 0 1 0 10.1 9.8" stroke="#5C8FF0" stroke-width="1.1"/></svg>
<div class="t" style="left:165px;top:632.0px;color:#DFE1E5;font-size:13px;line-height:16px;">SecurityUtils</div>
<svg class="a" style="left:146px;top:655px;" width="16" height="16" viewBox="0 0 16 16" fill="none"><circle cx="8" cy="8" r="6.3" fill="#3A3020" stroke="#E0A447" stroke-width="1.3"/><path d="M8.8 3.8 L6.2 8.4 H8.6 L7.2 12.2 L10 7.4 H7.6 Z" fill="#E0A447"/></svg>
<div class="t" style="left:165px;top:656.0px;color:#DFE1E5;font-size:13px;line-height:16px;">ShiroException</div>
<svg class="a" style="left:146px;top:679px;" width="16" height="16" viewBox="0 0 16 16" fill="none"><circle cx="8" cy="8" r="6.3" fill="#3A3020" stroke="#E0A447" stroke-width="1.3"/><path d="M8.8 3.8 L6.2 8.4 H8.6 L7.2 12.2 L10 7.4 H7.6 Z" fill="#E0A447"/></svg>
<div class="t" style="left:165px;top:680.0px;color:#DFE1E5;font-size:13px;line-height:16px;">UnavailableSecurityManagerException</div>
<svg class="a" style="left:70px;top:706px;" width="10" height="10" viewBox="0 0 10 10" fill="none"><path d="M3.5 1.5 L7 5 L3.5 8.5" stroke="#A8ADBD" stroke-width="1.1"/></svg>
<svg class="a" style="left:89px;top:703px;" width="16" height="16" viewBox="0 0 16 16" fill="none"><path d="M1.5 3 a1 1 0 0 1 1-1 H5.5 L7 3.5 H12.5 a1 1 0 0 1 1 1 V6.5 M1.5 3 V13 a1 1 0 0 0 1 1 H6.5" stroke="#CED0D6" stroke-width="1.1"/><path d="M8 8.5 h2 v6 h-2 z M10.5 10.5 h2 v4 h-2z M13 7 h2 v7.5 h-2z" fill="#548AF7"/></svg>
<div class="t" style="left:108px;top:704.0px;color:#DFE1E5;font-size:13px;line-height:16px;">Maven: org.apache.shiro:shiro-web:1.2.4</div>
<svg class="a" style="left:70px;top:730px;" width="10" height="10" viewBox="0 0 10 10" fill="none"><path d="M3.5 1.5 L7 5 L3.5 8.5" stroke="#A8ADBD" stroke-width="1.1"/></svg>
<svg class="a" style="left:89px;top:727px;" width="16" height="16" viewBox="0 0 16 16" fill="none"><path d="M1.5 3 a1 1 0 0 1 1-1 H5.5 L7 3.5 H12.5 a1 1 0 0 1 1 1 V6.5 M1.5 3 V13 a1 1 0 0 0 1 1 H6.5" stroke="#CED0D6" stroke-width="1.1"/><path d="M8 8.5 h2 v6 h-2 z M10.5 10.5 h2 v4 h-2z M13 7 h2 v7.5 h-2z" fill="#548AF7"/></svg>
<div class="t" style="left:108px;top:728.0px;color:#DFE1E5;font-size:13px;line-height:16px;">Maven: org.codehaus.groovy:groovy-all:1.8.5</div>
<svg class="a" style="left:70px;top:754px;" width="10" height="10" viewBox="0 0 10 10" fill="none"><path d="M3.5 1.5 L7 5 L3.5 8.5" stroke="#A8ADBD" stroke-width="1.1"/></svg>
<svg class="a" style="left:89px;top:751px;" width="16" height="16" viewBox="0 0 16 16" fill="none"><path d="M1.5 3 a1 1 0 0 1 1-1 H5.5 L7 3.5 H12.5 a1 1 0 0 1 1 1 V6.5 M1.5 3 V13 a1 1 0 0 0 1 1 H6.5" stroke="#CED0D6" stroke-width="1.1"/><path d="M8 8.5 h2 v6 h-2 z M10.5 10.5 h2 v4 h-2z M13 7 h2 v7.5 h-2z" fill="#548AF7"/></svg>
<div class="t" style="left:108px;top:752.0px;color:#DFE1E5;font-size:13px;line-height:16px;">Maven: org.easymock:easymock:3.1</div>
<svg class="a" style="left:70px;top:778px;" width="10" height="10" viewBox="0 0 10 10" fill="none"><path d="M3.5 1.5 L7 5 L3.5 8.5" stroke="#A8ADBD" stroke-width="1.1"/></svg>
<svg class="a" style="left:89px;top:775px;" width="16" height="16" viewBox="0 0 16 16" fill="none"><path d="M1.5 3 a1 1 0 0 1 1-1 H5.5 L7 3.5 H12.5 a1 1 0 0 1 1 1 V6.5 M1.5 3 V13 a1 1 0 0 0 1 1 H6.5" stroke="#CED0D6" stroke-width="1.1"/><path d="M8 8.5 h2 v6 h-2 z M10.5 10.5 h2 v4 h-2z M13 7 h2 v7.5 h-2z" fill="#548AF7"/></svg>
<div class="t" style="left:108px;top:776.0px;color:#DFE1E5;font-size:13px;line-height:16px;">Maven: org.eclipse.jdt.core.compiler:ecj:3.5.1</div>
</div>
<div class="a" style="left:365px;top:75px;width:1px;height:721px;background:#1E1F22"></div>
<div class="a" style="left:356px;top:482px;width:8px;height:191px;border-radius:4px;background:#5B5247"></div>
<div class="a" style="left:38px;top:786px;width:270px;height:8px;background:rgba(110,113,120,0.5)"></div>
<div class="a" style="left:366px;top:33px;width:1403px;height:42px;background:#2F2920"></div>
<div class="a" style="left:1769px;top:33px;width:106px;height:42px;background:#1E1F22"></div>
<div class="a" style="left:1306px;top:33px;width:272px;height:42px;background:#3D3223"></div>
<div class="a" style="left:1306px;top:71px;width:272px;height:3px;border-radius:2px;background:#6F737A"></div>
<svg class="a" style="left:378px;top:46px;" width="16" height="16" viewBox="0 0 16 16" fill="none"><circle cx="8" cy="8" r="6.3" fill="#253A2A" stroke="#5FB865" stroke-width="1.3"/><path d="M6.2 5.2 H9.8 M6.2 10.8 H9.8 M8 5.2 V10.8" stroke="#5FB865" stroke-width="1.3"/></svg>
<div class="t" style="left:399px;top:47.0px;color:#DFE1E5;font-size:13px;line-height:16px;">RememberMeManager.class</div>
<svg class="a" style="left:607px;top:46px;" width="16" height="16" viewBox="0 0 16 16" fill="none"><circle cx="8" cy="8" r="6.2" fill="#25324F" stroke="#5086EE" stroke-width="1.2" stroke-dasharray="8.2 1.7" stroke-dashoffset="4.1"/><path d="M10.1 6.2 A2.6 2.6 0 1 0 10.1 9.8" stroke="#5C8FF0" stroke-width="1.1"/></svg>
<div class="t" style="left:629px;top:47.0px;color:#DFE1E5;font-size:13px;line-height:16px;">AbstractRememberMeManager.class</div>
<svg class="a" style="left:885px;top:46px;" width="16" height="16" viewBox="0 0 16 16" fill="none"><circle cx="8" cy="8" r="6.2" fill="#25324F" stroke="#5086EE" stroke-width="1.2"/><path d="M10.1 6.2 A2.6 2.6 0 1 0 10.1 9.8" stroke="#5C8FF0" stroke-width="1.1"/></svg>
<div class="t" style="left:907px;top:47.0px;color:#DFE1E5;font-size:13px;line-height:16px;">DefaultSecurityManager.class</div>
<svg class="a" style="left:1118px;top:46px;" width="16" height="16" viewBox="0 0 16 16" fill="none"><circle cx="8" cy="8" r="6.2" fill="#25324F" stroke="#5086EE" stroke-width="1.2"/><path d="M10.1 6.2 A2.6 2.6 0 1 0 10.1 9.8" stroke="#5C8FF0" stroke-width="1.1"/></svg>
<div class="t" style="left:1140px;top:47.0px;color:#DFE1E5;font-size:13px;line-height:16px;">DelegatingSubject.class</div>
<svg class="a" style="left:1317px;top:46px;" width="16" height="16" viewBox="0 0 16 16" fill="none"><circle cx="8" cy="8" r="6.2" fill="#25324F" stroke="#5086EE" stroke-width="1.2"/><path d="M10.1 6.2 A2.6 2.6 0 1 0 10.1 9.8" stroke="#5C8FF0" stroke-width="1.1"/></svg>
<div class="t" style="left:1339px;top:47.0px;color:#DFE1E5;font-size:13px;line-height:16px;">CookieRememberMeManager.class</div>
<svg class="a" style="left:1588px;top:46px;" width="16" height="16" viewBox="0 0 16 16" fill="none"><circle cx="8" cy="8" r="6.2" fill="#25324F" stroke="#5086EE" stroke-width="1.2" stroke-dasharray="8.2 1.7" stroke-dashoffset="4.1"/><path d="M10.1 6.2 A2.6 2.6 0 1 0 10.1 9.8" stroke="#5C8FF0" stroke-width="1.1"/></svg>
<div class="t" style="left:1610px;top:47.0px;color:#DFE1E5;font-size:13px;line-height:16px;">JcaCipherService.class</div>
<svg class="a" style="left:1556px;top:48px;" width="12" height="12" viewBox="0 0 12 12" fill="none"><path d="M2 2 L10 10 M10 2 L2 10" stroke="#8C8F96" stroke-width="1.1"/></svg>
<svg class="a" style="left:1853px;top:46px;" width="6" height="16" viewBox="0 0 6 16" fill="none"><circle cx="3" cy="2.5" r="1.3" fill="#CED0D6"/><circle cx="3" cy="8" r="1.3" fill="#CED0D6"/><circle cx="3" cy="13.5" r="1.3" fill="#CED0D6"/></svg>
<div class="a" style="left:366px;top:75px;width:1509px;height:39px;background:#25324D;border-top:1px solid #35538F;border-bottom:1px solid #35538F"></div>
<svg class="a" style="left:378px;top:86px;" width="16" height="16" viewBox="0 0 16 16" fill="none"><circle cx="8" cy="8" r="7" fill="#548AF7"/><path d="M8 7 V12" stroke="#fff" stroke-width="1.6"/><circle cx="8" cy="4.6" r="1" fill="#fff"/></svg>
<div class="t" style="left:402px;top:87.0px;color:#DFE1E5;font-size:13px;line-height:16px;"><span style="font-size:12.0px">反编译</span> .class<span style="font-size:12.0px">文件</span>, <span style="font-size:12.0px">字节码版本</span>: 50.0 (Java 6)</div>
<div class="t" style="left:1720px;top:87.0px;color:#548AF7;font-size:13px;line-height:16px;"><span style="font-size:12.0px">下载源代码</span></div>
<div class="t" style="left:1800px;top:87.0px;color:#548AF7;font-size:13px;line-height:16px;"><span style="font-size:12.0px">选择源</span>(S)...</div>
<div class="a" style="left:366px;top:114px;width:1509px;height:23px;background:#1E1F22"></div>
<div class="a" style="left:366px;top:137px;width:1475px;height:1px;background:#393B40"></div>
<div class="ln" style="top:114px;line-height:22px">23</div>
<div class="cl" style="top:114px"><span class="k">public</span> <span class="k">class</span> CookieRememberMeManager <span class="k">extends</span> AbstractRememberMeManager {</div>
<div class="t" style="left:1029px;top:118.0px;color:#6F737A;font-size:12px;line-height:16px;">0 <span style="font-size:11.08px">个用法</span></div>
<svg class="a" style="left:1851px;top:119px;" width="20" height="20" viewBox="0 0 20 20" fill="none"><path d="M8 2.5 H10 L10.5 4.3 L12.2 5.2 L14 4.6 L15 6.3 L13.6 7.7 V9.4 L15 10.8 L14 12.5 L12.2 11.9 L10.5 12.8 L10 14.6 H8 L7.5 12.8 L5.8 11.9 L4 12.5 L3 10.8 L4.4 9.4 V7.7 L3 6.3 L4 4.6 L5.8 5.2 L7.5 4.3 Z" stroke="#8C8F96" stroke-width="1.1" stroke-linejoin="round"/><circle cx="9" cy="8.5" r="1.9" stroke="#8C8F96" stroke-width="1.1"/><path d="M17 14 V17 H14 Z" fill="#CED0D6"/></svg>
<svg class="a" style="left:400px;top:152px;" width="16" height="16" viewBox="0 0 16 16" fill="none"><circle cx="6.5" cy="9" r="5.3" fill="#253A2A" stroke="#5FB865" stroke-width="1.1"/><path d="M5 6.8 H8 M5 11.2 H8 M6.5 6.8 V11.2" stroke="#5FB865" stroke-width="1.1"/><path d="M12.7 2 V10 M10.8 4 L12.7 2 L14.6 4" stroke="#E06C75" stroke-width="1.1"/></svg>
<div class="a" style="left:1866px;top:386px;width:8px;height:152px;background:rgba(110,113,120,0.45)"></div>
<div class="a" style="left:441px;top:786px;width:1010px;height:8px;background:rgba(110,113,120,0.45)"></div>
<div class="a" style="left:560px;top:479px;width:514px;height:28px;border:2px solid #A9323A;border-radius:4px"></div>
<div class="a" style="left:598px;top:674px;width:320px;height:29px;border:2px solid #A9323A;border-radius:4px"></div>
<svg class="a" style="left:1070px;top:460px;overflow:visible" width="160" height="250" viewBox="0 0 160 250" fill="none"><path d="M14.5 29.4 L120 27 L120 23.6 L131.8 30.7 L120 37.9 L120 34.2 L14.5 30.4 Z" fill="#F23B3B"/><path d="M-145 225 L32 216.4 L32 210.7 L52.8 222 L32 234.1 L32 228.4 L-145 226 Z" fill="#F23B3B"/></svg>
<div class="t" style="left:1214px;top:477.0px;color:#F23B3B;font-size:21px;line-height:26px;"><span style="font-size:20px">提取</span>Cookie</div>
<div class="t" style="left:1135px;top:671.0px;color:#F23B3B;font-size:21px;line-height:26px;">Base64<span style="font-size:20px">解码</span></div>
<div class="a" style="left:37px;top:795px;width:1838px;height:1px;background:#1E1F22"></div>
<div class="t" style="left:49px;top:809.0px;color:#DFE1E5;font-size:13px;line-height:16px;font-weight:bold"><span style="font-size:12.0px">服务</span></div>
<svg class="a" style="left:1794px;top:808px;" width="16" height="16" viewBox="0 0 16 16" fill="none"><circle cx="8" cy="8" r="6.3" stroke="#CED0D6" stroke-width="1.2"/><path d="M8 1 V5 M8 11 V15 M1 8 H5 M11 8 H15" stroke="#CED0D6" stroke-width="1.2"/></svg>
<svg class="a" style="left:1825px;top:808px;" width="6" height="16" viewBox="0 0 6 16" fill="none"><circle cx="3" cy="2.5" r="1.3" fill="#CED0D6"/><circle cx="3" cy="8" r="1.3" fill="#CED0D6"/><circle cx="3" cy="13.5" r="1.3" fill="#CED0D6"/></svg>
<div class="a" style="left:1848px;top:815px;width:12px;height:1.3px;background:#CED0D6"></div>
<div class="a" style="left:37px;top:836px;width:1838px;height:1px;background:#1E1F22"></div>
<svg class="a" style="left:49px;top:845px;" width="20" height="20" viewBox="0 0 20 20" fill="none"><path d="M8 2 V15 M1.5 8.5 H14.5" stroke="#CED0D6" stroke-width="1.2"/><path d="M17 14 V17 H14 Z" fill="#CED0D6"/></svg>
<svg class="a" style="left:74px;top:845px;" width="20" height="20" viewBox="0 0 20 20" fill="none"><path d="M1.5 9 C4 4.5 14 4.5 16.5 9 C14 13.5 4 13.5 1.5 9 Z" stroke="#CED0D6" stroke-width="1.2"/><circle cx="9" cy="9" r="2.3" stroke="#CED0D6" stroke-width="1.2"/><path d="M18 14 V17 H15 Z" fill="#CED0D6"/></svg>
<svg class="a" style="left:100px;top:845px;" width="20" height="20" viewBox="0 0 20 20" fill="none"><path d="M9 4.5 H3 a1 1 0 0 0 -1 1 V14.5 a1 1 0 0 0 1 1 H13 a1 1 0 0 0 1-1 V10 M14 1.5 V7.5 M11 4.5 H17" stroke="#CED0D6" stroke-width="1.2"/></svg>
<div class="a" style="left:125px;top:846px;width:1px;height:16px;background:#43454A"></div>
<svg class="a" style="left:134px;top:846px;" width="16" height="16" viewBox="0 0 16 16" fill="none"><path d="M4 6 L8 2 L12 6 M4 10 L8 14 L12 10" stroke="#CED0D6" stroke-width="1.2"/></svg>
<svg class="a" style="left:160px;top:846px;" width="16" height="16" viewBox="0 0 16 16" fill="none"><path d="M4 2 L8 6 L12 2 M4 14 L8 10 L12 14" stroke="#CED0D6" stroke-width="1.2"/></svg>
<svg class="a" style="left:52px;top:883px;" width="10" height="10" viewBox="0 0 10 10" fill="none"><path d="M1.5 3.5 L5 7 L8.5 3.5" stroke="#A8ADBD" stroke-width="1.1"/></svg>
<svg class="a" style="left:71px;top:879px;" width="17" height="17" viewBox="0 0 17 17" fill="none"><path d="M1 13.5 C2.5 10.5 5.5 8 9.5 7.5 L12.5 8.5 L14 12.5 L12 13 L10.5 11.5 C8 12 5.5 13 3.5 14.8 Z" fill="#F0C23B" stroke="#2A2410" stroke-width="0.7"/><path d="M9 5.5 L9.3 2 L11 3.6 H13.4 L15.2 2 L15.4 5.5 C15.4 7.8 14 9 12.2 9 C10.4 9 9 7.8 9 5.5 Z" fill="#F0C23B" stroke="#2A2410" stroke-width="0.7"/><path d="M11 5.8 H11.6 M12.9 5.8 H13.5 M11.6 7.3 H12.9" stroke="#2A2410" stroke-width="0.8"/><path d="M1 9.5 C2.5 8 4.5 7.6 6 8" stroke="#2A2410" stroke-width="0.9"/></svg>
<div class="t" style="left:89px;top:881.0px;color:#DFE1E5;font-size:13px;line-height:16px;">Tomcat <span style="font-size:12.0px">服务器</span></div>
<div class="a" style="left:49px;top:900px;width:526px;height:24px;border-radius:4px;background:#43454A"></div>
<svg class="a" style="left:71px;top:907px;" width="10" height="10" viewBox="0 0 10 10" fill="none"><path d="M1.5 3.5 L5 7 L8.5 3.5" stroke="#A8ADBD" stroke-width="1.1"/></svg>
<svg class="a" style="left:90px;top:903px;" width="17" height="17" viewBox="0 0 17 17" fill="none"><path d="M1 13.5 C2.5 10.5 5.5 8 9.5 7.5 L12.5 8.5 L14 12.5 L12 13 L10.5 11.5 C8 12 5.5 13 3.5 14.8 Z" fill="#F0C23B" stroke="#2A2410" stroke-width="0.7"/><path d="M9 5.5 L9.3 2 L11 3.6 H13.4 L15.2 2 L15.4 5.5 C15.4 7.8 14 9 12.2 9 C10.4 9 9 7.8 9 5.5 Z" fill="#F0C23B" stroke="#2A2410" stroke-width="0.7"/><path d="M11 5.8 H11.6 M12.9 5.8 H13.5 M11.6 7.3 H12.9" stroke="#2A2410" stroke-width="0.8"/><path d="M1 9.5 C2.5 8 4.5 7.6 6 8" stroke="#2A2410" stroke-width="0.9"/><path d="M10.5 9.5 V16 L15.5 12.75 Z" fill="#5FB865"/></svg>
<div class="t" style="left:108px;top:905.0px;color:#DFE1E5;font-size:13px;line-height:16px;"><b style="color:#DFE1E5">Tomcat 9.0.105</b> <span style="color:#868A91">[<span style="font-size:12.0px">本地</span>]</span></div>
<svg class="a" style="left:108px;top:927px;" width="20" height="18" viewBox="0 0 20 18" fill="none"><path d="M9 1.5 L11.5 4 L9 6.5 L6.5 4 Z" stroke="#A8ADBD" stroke-width="1"/><path d="M4 5.5 L6.5 8 L4 10.5 L1.5 8 Z" stroke="#548AF7" stroke-width="1.1"/><circle cx="10.5" cy="12" r="4.2" fill="#2B2D30" stroke="#CED0D6" stroke-width="1.1"/><path d="M6.5 12 H14.5 M10.5 8 V16 M8 9.5 C9 11 9 13 8 14.5 M13 9.5 C12 11 12 13 13 14.5" stroke="#CED0D6" stroke-width="0.7"/></svg>
<svg class="a" style="left:124px;top:928px;" width="16" height="16" viewBox="0 0 16 16" fill="none"><path d="M2.5 8.5 L6 12 L13.5 4" stroke="#5FB865" stroke-width="1.6"/></svg>
<div class="t" style="left:143px;top:929.0px;color:#DFE1E5;font-size:13px;line-height:16px;">samples-web:war <span style="color:#868A91">[<span style="font-size:12.0px">已同步</span>]</span></div>
<svg class="a" style="left:70px;top:951px;" width="17" height="17" viewBox="0 0 17 17" fill="none"><path d="M1 8.5 H12 C12.5 7.5 13.5 7 15.5 7.5 C15 9 13.8 9.5 13 9.5 C12 13 9 15 5.5 15 C2.5 15 1 12 1 8.5 Z" fill="#548AF7"/><rect x="4" y="2" width="5" height="5.5" rx="0.8" fill="#548AF7"/><circle cx="5" cy="11.5" r="1.2" fill="#2B2D30"/></svg>
<div class="t" style="left:89px;top:953.0px;color:#DFE1E5;font-size:13px;line-height:16px;">Docker</div>
<div class="a" style="left:579px;top:873px;width:8px;height:116px;border-radius:4px;background:#4C4E52"></div>
<div class="a" style="left:588px;top:837px;width:1px;height:159px;background:#1E1F22"></div>
<svg class="a" style="left:599px;top:844px;" width="20" height="20" viewBox="0 0 20 20" fill="none"><path d="M14.5 6.5 A6 6 0 1 0 9 16" stroke="#CED0D6" stroke-width="1.2"/><path d="M11.5 2.5 L14.8 6 L11 8" stroke="#CED0D6" stroke-width="1.2"/><path d="M11.5 10.5 V17.5 L17 14 Z" stroke="#5FB865" stroke-width="1.2" stroke-linejoin="round"/></svg>
<svg class="a" style="left:625px;top:844px;" width="20" height="20" viewBox="0 0 20 20" fill="none"><path d="M14.5 6.5 A6 6 0 1 0 9 16" stroke="#CED0D6" stroke-width="1.2"/><path d="M11.5 2.5 L14.8 6 L11 8" stroke="#CED0D6" stroke-width="1.2"/><ellipse cx="14" cy="14.5" rx="2.3" ry="2.8" stroke="#5FB865" stroke-width="1.1"/><path d="M10.5 13 H11.5 M16.5 13 H17.5 M10.5 16.5 H11.5 M16.5 16.5 H17.5" stroke="#5FB865" stroke-width="1"/></svg>
<svg class="a" style="left:651px;top:844px;" width="20" height="20" viewBox="0 0 20 20" fill="none"><rect x="3.5" y="3.5" width="13" height="13" rx="1.5" fill="#5C3638" stroke="#E55765" stroke-width="1.2"/></svg>
<svg class="a" style="left:677px;top:844px;" width="20" height="20" viewBox="0 0 20 20" fill="none"><path d="M15.5 7 A6.2 6.2 0 1 0 16 11" stroke="#CED0D6" stroke-width="1.2"/><path d="M12.5 3 L15.8 7 L12 8.8" stroke="#CED0D6" stroke-width="1.2"/></svg>
<div class="a" style="left:703px;top:845px;width:1px;height:18px;background:#43454A"></div>
<svg class="a" style="left:710px;top:844px;" width="20" height="20" viewBox="0 0 20 20" fill="none"><rect x="3" y="3" width="3.5" height="14" rx="0.8" stroke="#5FB865" stroke-width="1.2"/><path d="M10 3.5 L17 10 L10 16.5 Z" stroke="#5FB865" stroke-width="1.2" stroke-linejoin="round"/></svg>
<svg class="a" style="left:736px;top:844px;" width="20" height="20" viewBox="0 0 20 20" fill="none"><rect x="4.5" y="3.5" width="3" height="13" stroke="#6F737A" stroke-width="1.1"/><rect x="11.5" y="3.5" width="3" height="13" stroke="#6F737A" stroke-width="1.1"/></svg>
<svg class="a" style="left:762px;top:844px;" width="20" height="20" viewBox="0 0 20 20" fill="none"><path d="M3 12 C4.5 6.5 10 5.5 14.5 10.5" stroke="#CED0D6" stroke-width="1.2"/><path d="M10.5 10.8 H15 V6.5" stroke="#CED0D6" stroke-width="1.2"/><path d="M3 16.5 H16" stroke="#CED0D6" stroke-width="1.3"/></svg>
<svg class="a" style="left:788px;top:844px;" width="20" height="20" viewBox="0 0 20 20" fill="none"><path d="M10 2.5 V12.5 M6 8.5 L10 12.5 L14 8.5 M4 16.5 H16" stroke="#CED0D6" stroke-width="1.3"/></svg>
<svg class="a" style="left:814px;top:844px;" width="20" height="20" viewBox="0 0 20 20" fill="none"><path d="M10 13 V3 M6 7 L10 3 L14 7 M4 16.5 H16" stroke="#CED0D6" stroke-width="1.3"/></svg>
<div class="a" style="left:840px;top:845px;width:1px;height:18px;background:#43454A"></div>
<svg class="a" style="left:847px;top:844px;" width="20" height="20" viewBox="0 0 20 20" fill="none"><circle cx="12" cy="8" r="5" fill="#4A2F32" stroke="#E55765" stroke-width="1.3"/><circle cx="8" cy="12" r="5" fill="#4A2F32" stroke="#E55765" stroke-width="1.3"/></svg>
<svg class="a" style="left:873px;top:844px;" width="20" height="20" viewBox="0 0 20 20" fill="none"><circle cx="10" cy="10" r="5.5" stroke="#E55765" stroke-width="1.3"/><path d="M3 17 L17 3" stroke="#2B2D30" stroke-width="3"/><path d="M3 17 L17 3" stroke="#CED0D6" stroke-width="1.2"/></svg>
<svg class="a" style="left:906px;top:846px;" width="6" height="16" viewBox="0 0 6 16" fill="none"><circle cx="3" cy="2.5" r="1.3" fill="#CED0D6"/><circle cx="3" cy="8" r="1.3" fill="#CED0D6"/><circle cx="3" cy="13.5" r="1.3" fill="#CED0D6"/></svg>
<div class="t" style="left:947px;top:847.0px;color:#DFE1E5;font-size:13px;line-height:16px;"><span style="font-size:12.0px">线程和变量</span></div>
<div class="a" style="left:933px;top:869px;width:87px;height:3px;background:#3574F0"></div>
<div class="t" style="left:1032px;top:847.0px;color:#DFE1E5;font-size:13px;line-height:16px;"><span style="font-size:12.0px">服务器</span></div>
<svg class="a" style="left:1092px;top:847px;" width="16" height="14" viewBox="0 0 16 14" fill="none"><rect x="1.5" y="1.5" width="13" height="11" rx="1" stroke="#CED0D6" stroke-width="1.1"/><path d="M4 5 L6 7 L4 9 M7 9.5 H11" stroke="#CED0D6" stroke-width="1.1"/></svg>
<div class="t" style="left:1113px;top:847.0px;color:#DFE1E5;font-size:13px;line-height:16px;">Tomcat Localhost <span style="font-size:12.0px">日志</span></div>
<svg class="a" style="left:1282px;top:847px;" width="16" height="14" viewBox="0 0 16 14" fill="none"><rect x="1.5" y="1.5" width="13" height="11" rx="1" stroke="#CED0D6" stroke-width="1.1"/><path d="M4 5 L6 7 L4 9 M7 9.5 H11" stroke="#CED0D6" stroke-width="1.1"/></svg>
<div class="t" style="left:1304px;top:847.0px;color:#DFE1E5;font-size:13px;line-height:16px;">Tomcat Catalina <span style="font-size:12.0px">日志</span></div>
<svg class="a" style="left:1856px;top:846px;" width="16" height="16" viewBox="0 0 16 16" fill="none"><rect x="1.5" y="1.5" width="13" height="13" rx="1.5" stroke="#CED0D6" stroke-width="1.1"/><path d="M6.5 1.5 V14.5 M6.5 8 H14.5" stroke="#CED0D6" stroke-width="1.1"/></svg>
<div class="a" style="left:588px;top:871px;width:1287px;height:1px;background:#1E1F22"></div>
<svg class="a" style="left:597px;top:880px;" width="16" height="16" viewBox="0 0 16 16" fill="none"><path d="M2.5 8.5 L6 12 L13.5 4.5" stroke="#E08855" stroke-width="1.6"/></svg>
<div class="t" style="left:620px;top:881.0px;color:#DFE1E5;font-size:13px;line-height:16px;">"ht...<span style="font-size:12.0px">在</span>...</div>
<div class="a" style="left:681px;top:877px;width:22px;height:22px;border-radius:4px;background:#4E5157"></div>
<svg class="a" style="left:684px;top:880px;" width="16" height="16" viewBox="0 0 16 16" fill="none"><path d="M2 3 H14 L9.5 8.5 V13.5 L6.5 12 V8.5 Z" stroke="#CED0D6" stroke-width="1.2" stroke-linejoin="round"/></svg>
<svg class="a" style="left:720px;top:883px;" width="10" height="10" viewBox="0 0 10 10" fill="none"><path d="M1.5 3.5 L5 7 L8.5 3.5" stroke="#CED0D6" stroke-width="1.1"/></svg>
<div class="a" style="left:589px;top:904px;width:153px;height:1px;background:#1E1F22"></div>
<div class="a" style="left:742px;top:872px;width:1px;height:124px;background:#1E1F22"></div>
<div class="a" style="left:743px;top:872px;width:1132px;height:32px;background:#36373B"></div>
<div class="a" style="left:743px;top:904px;width:1132px;height:1px;background:#1E1F22"></div>
<div class="t" style="left:753px;top:881.0px;color:#6F737A;font-size:13px;line-height:16px;"><span style="font-size:12.0px">对表达式求值</span><span class="mono" style="font-size:11.7px">(Enter)</span><span style="font-size:12.0px">或添加监视</span><span class="mono" style="font-size:11.7px">(Ctrl+Shift+Enter)</span></div>
<div class="t" style="left:1764px;top:881.0px;color:#6F737A;font-size:12px;line-height:16px;">Java</div>
<svg class="a" style="left:1792px;top:883px;" width="10" height="10" viewBox="0 0 10 10" fill="none"><path d="M8 2 V8 H2 Z" fill="#8C8F96"/></svg>
<svg class="a" style="left:1818px;top:878px;" width="18" height="20" viewBox="0 0 18 20" fill="none"><path d="M8.5 2 V11 M4 6.5 H13" stroke="#5A5D63" stroke-width="1.1"/><circle cx="5" cy="14.5" r="2.3" stroke="#5A5D63" stroke-width="1"/><circle cx="12" cy="14.5" r="2.3" stroke="#5A5D63" stroke-width="1"/></svg>
<svg class="a" style="left:1853px;top:883px;" width="10" height="10" viewBox="0 0 10 10" fill="none"><path d="M1.5 3.5 L5 7 L8.5 3.5" stroke="#CED0D6" stroke-width="1.1"/></svg>
<div class="a" style="left:589px;top:909px;width:8px;height:24px;background:#3D3223"></div>
<div class="a" style="left:597px;top:909px;width:145px;height:24px;border-radius:4px 0 0 4px;background:#2E436E"></div>
<svg class="a" style="left:605px;top:913px;" width="16" height="16" viewBox="0 0 16 16" fill="none"><path d="M5 3.5 L2.5 6 L5 8.5 M2.5 6 H9.5 A3.5 3.5 0 0 1 9.5 13 H6" stroke="#CED0D6" stroke-width="1.2"/></svg>
<div class="a" style="left:589px;top:905px;width:153px;height:91px;overflow:hidden">
<div class="t" style="left:35px;top:9.0px;color:#DFE1E5;font-size:13px;line-height:16px;">getRememberedSerializedIdentity:71, CookieRememberMeManager</div>
</div>
<div class="t" style="left:624px;top:938.0px;color:#6F737A;font-size:13px;line-height:16px;">28 <span style="font-size:12.0px">个隐藏帧</span></div>
<div class="a" style="left:733px;top:906px;width:8px;height:64px;background:rgba(110,113,120,0.5)"></div>
<div class="a" style="left:590px;top:964px;width:32px;height:7px;border-radius:3px;background:#4C4E52"></div>
<div class="t" style="left:597px;top:977.0px;color:#6F737A;font-size:12px;line-height:16px;"><span style="font-size:11.08px">使用</span> Ctrl+Alt+<span style="font-size:11.08px">向上箭</span>...</div>
<svg class="a" style="left:725px;top:979px;" width="10" height="10" viewBox="0 0 10 10" fill="none"><path d="M1 1 L9 9 M9 1 L1 9" stroke="#8C8F96" stroke-width="1.1"/></svg>
<svg class="a" style="left:758px;top:916px;" width="10" height="10" viewBox="0 0 10 10" fill="none"><path d="M3.5 1.5 L7 5 L3.5 8.5" stroke="#CED0D6" stroke-width="1.1"/></svg>
<svg class="a" style="left:775px;top:913px;" width="16" height="16" viewBox="0 0 16 16" fill="none"><rect x="3.5" y="1.5" width="9" height="3.6" rx="0.8" stroke="#E5B83B" stroke-width="1.1"/><rect x="3.5" y="6.2" width="9" height="3.6" rx="0.8" stroke="#E5B83B" stroke-width="1.1"/><rect x="3.5" y="10.9" width="9" height="3.6" rx="0.8" stroke="#E5B83B" stroke-width="1.1"/></svg>
<div class="t" style="left:795px;top:914.0px;color:#DFE1E5;font-size:13px;line-height:16px;"><span style="color:#E0A873">this</span> = <span style="color:#868A91">{CookieRememberMeManager@3515}</span></div>
<svg class="a" style="left:758px;top:940px;" width="10" height="10" viewBox="0 0 10 10" fill="none"><path d="M3.5 1.5 L7 5 L3.5 8.5" stroke="#CED0D6" stroke-width="1.1"/></svg>
<svg class="a" style="left:775px;top:937px;" width="16" height="16" viewBox="0 0 16 16" fill="none"><circle cx="8" cy="8" r="6.5" stroke="#E08855" stroke-width="1.2"/><path d="M6.5 11.5 V4.8 H8.8 A2 2 0 0 1 8.8 8.8 H6.5" stroke="#E08855" stroke-width="1.2"/></svg>
<div class="t" style="left:795px;top:938.0px;color:#DFE1E5;font-size:13px;line-height:16px;"><span style="color:#E0A873">subjectContext</span> = <span style="color:#868A91">{DefaultWebSubjectContext@3512}</span>  size = 3</div>
<div class="a" style="left:0;top:995px;width:1914px;height:1px;background:#1E1F22"></div>
<div class="a" style="left:0;top:996px;width:1914px;height:10px;overflow:hidden">
<div class="t" style="left:28px;top:5.0px;color:#A8ADBD;font-size:13px;line-height:16px;">shiro-shiro-root  <span style="font-size:12.0px">〉</span> lib  <span style="font-size:12.0px">〉</span> shiro-core-1.2.4.jar  <span style="font-size:12.0px">〉</span> org  <span style="font-size:12.0px">〉</span> apache  <span style="font-size:12.0px">〉</span> shiro  <span style="font-size:12.0px">〉</span> mgt  <span style="font-size:12.0px">〉</span> CookieRememberMeManager</div>
<div class="a" style="left:414px;top:8px;width:14px;height:14px;border-radius:7px;border:1.3px solid #548AF7"></div>
<div class="t" style="left:435px;top:5.0px;color:#DFE1E5;font-size:13px;line-height:16px;">Enable Tomcat debugger logs</div>
<div class="t" style="left:1697px;top:5.0px;color:#A8ADBD;font-size:13px;line-height:16px;">73:1   CRLF   UTF-8</div>
<div class="t" style="left:1855px;top:5.0px;color:#A8ADBD;font-size:13px;line-height:16px;">4 <span style="font-size:12.0px">个空格</span></div>
</div>
</body></html>
